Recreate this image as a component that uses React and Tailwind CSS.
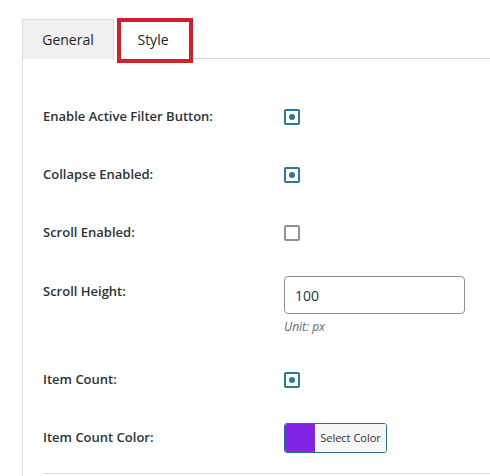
import React from "react";

const font = { fontFamily: '"Open Sans", "Noto Sans", sans-serif' };

function Checked() {
  return (
    <span className="flex h-4 w-4 items-center justify-center rounded-[2px] border-2 border-[#2c7896] bg-white">
      <span className="h-[6px] w-[6px] rounded-full bg-[#2c7896]" />
    </span>
  );
}

function Unchecked() {
  return <span className="block h-4 w-4 rounded-[2px] border-2 border-[#8c8f94] bg-white" />;
}

function Row({ label, children, h = "h-[58px]" }) {
  return (
    <div className={`flex ${h} items-center`}>
      <div className="w-[241px] shrink-0 text-[13px] font-semibold text-[#2c3338]">{label}</div>
      <div>{children}</div>
    </div>
  );
}

export default function App() {
  return (
    <div className="h-[476px] w-[490px] overflow-hidden bg-white" style={font}>
      <div className="pl-[22px] pt-[19px]">
        {/* tabs */}
        <div className="flex h-[40px] items-stretch">
          <div className="flex w-[92px] items-center justify-center border border-b-0 border-[#dcdcde] bg-[#f0f0f1] text-[14px] text-[#1d2327]">
            General
          </div>
          <div className="relative flex w-[78px] items-center justify-center bg-white text-[14px] text-[#1d2327]">
            Style
            <div className="absolute left-[3px] top-[-1px] h-[45px] w-[76px] border-[4px] border-[#d0202e]" />
          </div>
          <div className="flex-1 border-b border-[#dcdcde]" />
        </div>
        {/* content */}
        <div className="h-[420px] border-l border-[#dcdcde] pl-[20px] pt-[29px]">
          <Row label="Enable Active Filter Button:">
            <Checked />
          </Row>
          <Row label="Collapse Enabled:">
            <Checked />
          </Row>
          <Row label="Scroll Enabled:">
            <Unchecked />
          </Row>
          <div className="flex h-[89px] items-start pt-[14px]">
            <div className="w-[241px] shrink-0 pt-[6px] text-[13px] font-semibold text-[#2c3338]">Scroll Height:</div>
            <div>
              <div className="flex h-[38px] w-[181px] items-center rounded-[4px] border border-[#8c8f94] px-[10px] text-[14px] text-[#2c3338]">
                100
              </div>
              <div className="mt-[4px] text-[12px] italic text-[#646970]">Unit: px</div>
            </div>
          </div>
          <Row label="Item Count:">
            <Checked />
          </Row>
          <Row label="Item Count Color:">
            <div className="flex h-[30px] w-[103px] overflow-hidden rounded-[3px] border border-[#2c6e8a]">
              <div className="w-[30px] bg-[#8224e3]" />
              <div className="flex flex-1 items-center justify-center bg-[#f6f7f7] text-[11px] text-[#2c3338]">
                Select Color
              </div>
            </div>
          </Row>
          <div className="mt-[6px] border-t border-[#dcdcde]" />
        </div>
      </div>
    </div>
  );
}
